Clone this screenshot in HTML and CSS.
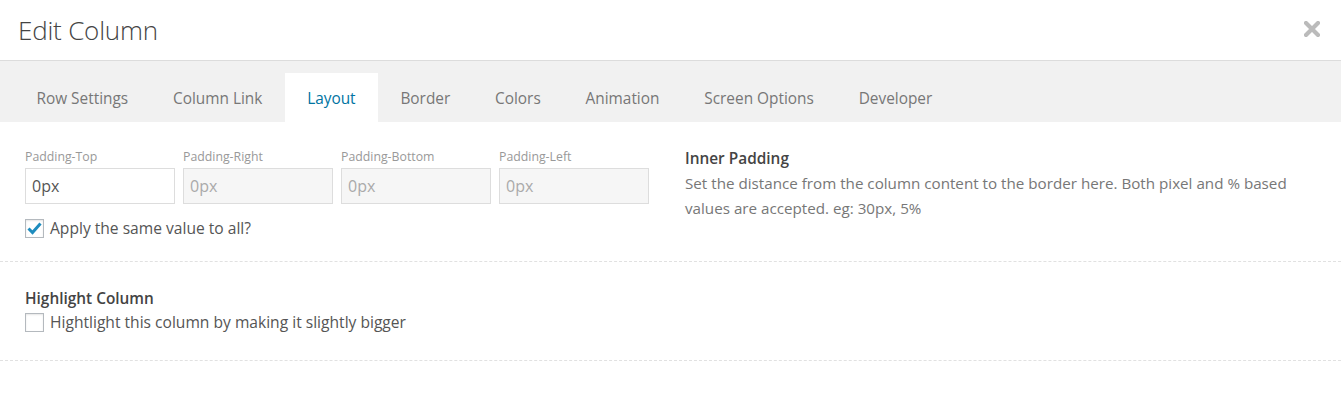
FILE: index.html
```html
<!DOCTYPE html>
<html lang="en">
<head>
  <meta charset="UTF-8">
  <title>Edit Column</title>
  <link rel="stylesheet" href="styles.css">
</head>
<body>

  <div class="modal-head">
    <h1>Edit Column</h1>
    <span class="close">
      <svg width="16" height="16" viewBox="0 0 16 16"><path d="M2 2 L14 14 M14 2 L2 14" stroke="#bbb" stroke-width="4.2" stroke-linecap="round"/></svg>
    </span>
  </div>

  <ul class="tabs">
    <li>Row Settings</li>
    <li>Column Link</li>
    <li class="active">Layout</li>
    <li>Border</li>
    <li>Colors</li>
    <li>Animation</li>
    <li>Screen Options</li>
    <li>Developer</li>
  </ul>

  <div class="section">
    <div class="fields">
      <div class="inputs">
        <div class="field">
          <label>Padding-Top</label>
          <input type="text" value="0px">
        </div>
        <div class="field">
          <label>Padding-Right</label>
          <input type="text" value="0px" disabled>
        </div>
        <div class="field">
          <label>Padding-Bottom</label>
          <input type="text" value="0px" disabled>
        </div>
        <div class="field">
          <label>Padding-Left</label>
          <input type="text" value="0px" disabled>
        </div>
      </div>
      <label class="check">
        <span class="box checked">
          <svg width="15" height="13" viewBox="0 0 15 13"><path d="M1.5 6.5 L5.5 10.5 L13.5 1.5" fill="none" stroke="#1e8cbe" stroke-width="3"/></svg>
        </span>
        Apply the same value to all?
      </label>
    </div>
    <div class="info">
      <h3>Inner Padding</h3>
      <p>Set the distance from the column content to the border here. Both pixel and % based values are accepted. eg: 30px, 5%</p>
    </div>
  </div>

  <div class="section second">
    <div>
      <h3>Highlight Column</h3>
      <label class="check">
        <span class="box"></span>
        Hightlight this column by making it slightly bigger
      </label>
    </div>
  </div>

</body>
</html>
```

FILE: styles.css
```css
body {
  margin: 0;
  font-family: "Open Sans", "Segoe UI", sans-serif;
  color: #444;
  background: #fff;
}

.modal-head {
  height: 60px;
  border-bottom: 1px solid #dcdcdc;
  display: flex;
  align-items: center;
  justify-content: space-between;
  padding: 0 21px 0 18px;
}

.modal-head h1 {
  margin: 0;
  font-size: 26px;
  font-weight: 300;
  color: #444;
  letter-spacing: -0.2px;
}

.close {
  display: flex;
  margin-top: -2px;
}

.tabs {
  list-style: none;
  margin: 0;
  padding: 12px 0 0 14px;
  background: #f1f1f1;
  display: flex;
}

.tabs li {
  padding: 0 22.4px;
  height: 49px;
  line-height: 51px;
  font-size: 15.4px;
  color: #777;
}

.tabs li.active {
  background: #fff;
  color: #0074a2;
}

.section {
  display: flex;
  padding: 27px 25px 23px;
  border-bottom: 1px dashed #e1e1e1;
}

.section.second {
  padding-top: 27px;
  padding-bottom: 28px;
}

.fields {
  width: 626px;
  flex-shrink: 0;
}

.inputs {
  display: flex;
  gap: 8px;
}

.field label {
  display: block;
  font-size: 12.3px;
  color: #999;
  line-height: 16px;
  margin-bottom: 3px;
}

.field input {
  width: 150px;
  height: 36px;
  box-sizing: border-box;
  border: 1px solid #ddd;
  padding: 0 6px;
  font-family: "Open Sans", sans-serif;
  font-size: 16px;
  color: #555;
  background: #fff;
  margin: 0;
}

.field input:disabled {
  background: #f6f6f6;
  color: #aaa;
}

.check {
  display: flex;
  align-items: center;
  gap: 6px;
  font-size: 15.6px;
  line-height: 20px;
  color: #555;
}

.fields .check {
  margin-top: 14px;
}

.box {
  width: 19px;
  height: 19px;
  box-sizing: border-box;
  border: 1px solid #b4b9be;
  background: #fff;
  box-shadow: inset 0 1px 2px rgba(0, 0, 0, 0.1);
  display: flex;
  align-items: center;
  justify-content: center;
}

.info {
  margin-left: 34px;
}

h3 {
  margin: 0;
  font-size: 15.4px;
  font-weight: 600;
  color: #444;
  line-height: 20px;
}

.info p {
  margin: 2px 0 0;
  font-size: 15.2px;
  line-height: 25px;
  color: #777;
}

.second .check {
  margin-top: 3px;
}
```
